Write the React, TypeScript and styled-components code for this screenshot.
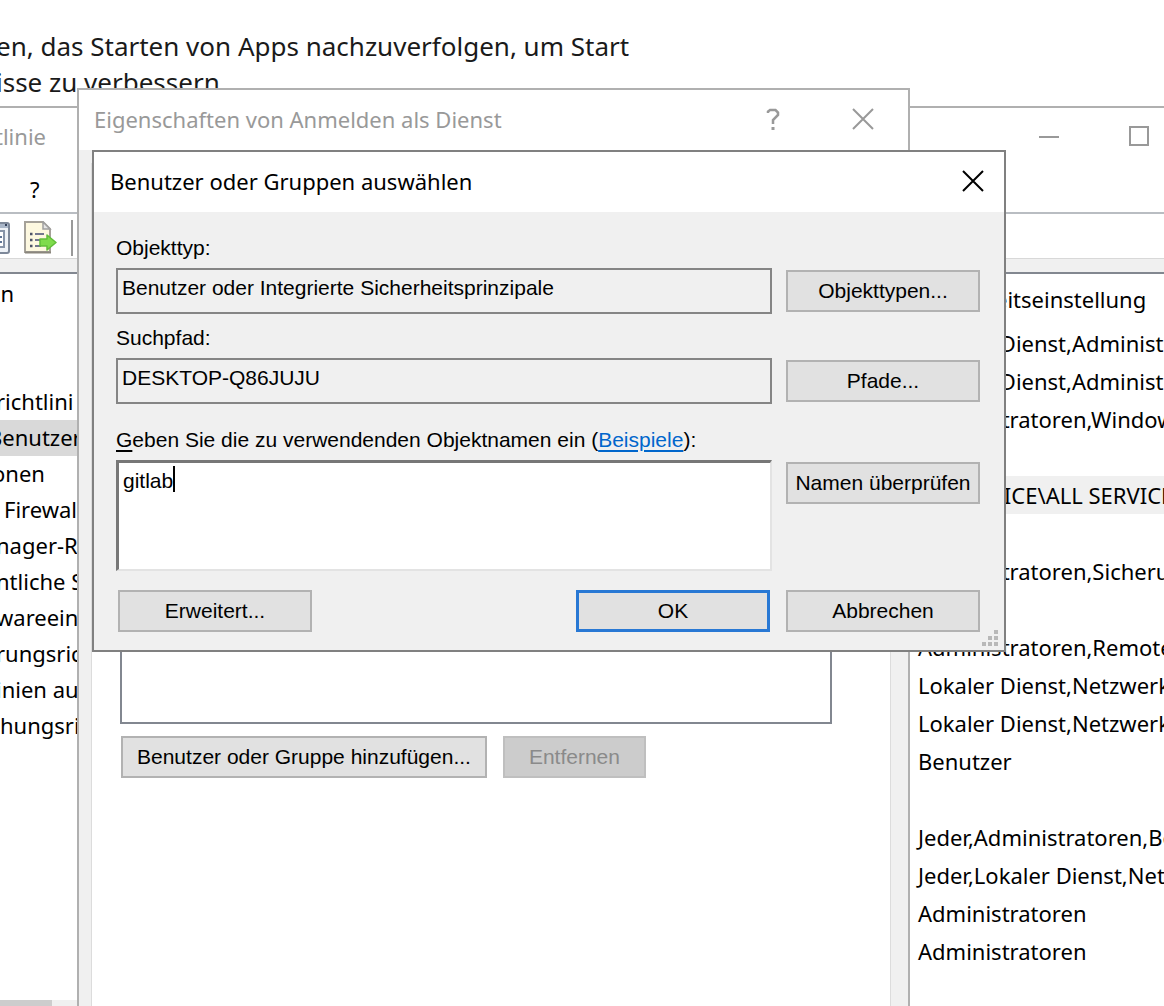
import React, { useState } from "react";
import styled, { createGlobalStyle } from "styled-components";

const UI = '"Noto Sans", "Open Sans", sans-serif';
const FORM = '"Liberation Sans", Arial, sans-serif';

const Global = createGlobalStyle`
  *, *::before, *::after { box-sizing: border-box; }
  body { margin: 0; background: #fff; color: #000; }
  button, input, textarea, select { font: inherit; color: inherit; border-radius: 0; }
`;

const Desktop = styled.div`
  position: relative;
  min-height: 100vh;
  overflow: hidden;
  font: 22px/28px ${UI};
`;

const Notice = styled.p`
  margin: 0 0 0 -4px;
  padding-top: 28px;
  font-size: 26px;
  line-height: 36px;
  color: #1a1a1a;
  white-space: nowrap;
`;

/* ---------- window parts ---------- */

const Title = styled.h1<{ $inactive?: boolean }>`
  flex: 1;
  margin: 0;
  font: inherit;
  color: ${(p) => (p.$inactive ? "#999" : "#000")};
  white-space: nowrap;
`;

const CaptionButton = styled.button<{ $inactive?: boolean; $compact?: boolean }>`
  display: grid;
  place-items: center;
  width: ${(p) => (p.$compact ? 62 : 90)}px;
  align-self: stretch;
  padding: 0;
  border: 0;
  background: none;
  color: ${(p) => (p.$inactive ? "#999" : "#000")};
`;

const TitleBar = styled.header<{ $height: number; $indent: number }>`
  display: flex;
  align-items: center;
  height: ${(p) => p.$height}px;
  padding: 0 0 3px ${(p) => p.$indent}px;
  background: #fff;
`;

/* ---------- policy console ---------- */

const ConsoleWindow = styled.section`
  position: absolute;
  inset: 106px -110px 0 -20px;
  display: flex;
  flex-direction: column;
  border-top: 2px solid #b0b0b0;
  background: #fff;
`;

const MenuBar = styled.nav`
  display: flex;
  align-items: center;
  height: 48px;
  padding-left: 42px;
  border-bottom: 2px solid #b9bdc2;
`;

const MenuItem = styled.button`
  padding: 0 8px;
  border: 0;
  background: none;
  line-height: 42px;
`;

const ToolBar = styled.div`
  display: flex;
  align-items: center;
  gap: 14px;
  height: 45px;
  padding: 4px 0 0 12px;
  border-bottom: 1px solid #d8d8d8;
`;

const ToolButton = styled.button`
  display: flex;
  padding: 0;
  border: 0;
  background: none;
`;

const ToolDivider = styled.span`
  width: 2px;
  height: 36px;
  background: #999;
`;

const Panes = styled.div`
  flex: 1;
  display: grid;
  grid-template-columns: 928px 1fr;
  min-height: 0;
  padding-top: 13px;
  background: #f0f0f0;
`;

const TreePane = styled.div`
  display: flex;
  flex-direction: column;
  min-width: 0;
  border-top: 2px solid #828790;
  background: #fff;
`;

const Tree = styled.ul`
  flex: 1;
  margin: 0;
  padding: 2px 0 0;
  list-style: none;
`;

const TreeItem = styled.li<{ $level: number; $selected?: boolean }>`
  height: 36px;
  padding-left: ${(p) => p.$level * 4}px;
  background: ${(p) => (p.$selected ? "#d9d9d9" : "transparent")};
  line-height: 34px;
  white-space: nowrap;
`;

const ScrollTrack = styled.div`
  height: 6px;
  background: #f0f0f0;
`;

const ScrollThumb = styled.div`
  width: 72px;
  height: 6px;
  background: #cdcdcd;
`;

const ListPane = styled.div`
  overflow: hidden;
  border-top: 2px solid #828790;
  background: #fff;
`;

const PolicyTable = styled.table`
  width: 100%;
  border-collapse: collapse;
  white-space: nowrap;

  th {
    height: 50px;
    padding: 0 10px;
    font-weight: normal;
    text-align: left;
  }
  td {
    height: 38px;
    padding: 0 10px;
  }
`;

const PolicyRow = styled.tr<{ $selected?: boolean }>`
  background: ${(p) => (p.$selected ? "#f0f0f0" : "transparent")};
`;

/* ---------- properties window ---------- */

const PropertiesWindow = styled.section`
  position: absolute;
  inset: 88px auto -40px 77px;
  width: 833px;
  display: flex;
  flex-direction: column;
  border: 2px solid #b0b0b0;
  background: #f0f0f0;
`;

const TabPage = styled.div`
  flex: 1;
  display: flex;
  flex-direction: column;
  gap: 12px;
  margin: 13px 17px 0 12px;
  padding: 60px 58px 0 28px;
  border: 1px solid #dcdcdc;
  background: #fff;
`;

const MemberList = styled.select`
  height: 500px;
  border: 2px solid #828790;
  background: #fff;
`;

const ButtonRow = styled.div`
  display: flex;
  gap: 16px;
  padding-left: 1px;
`;

const PushButton = styled.button<{ $primary?: boolean }>`
  height: 42px;
  padding: 0 14px;
  border: ${(p) => (p.$primary ? "3px solid #2878d4" : "2px solid #b2b2b2")};
  background: #e1e1e1;
  font: 21px/36px ${FORM};
  white-space: nowrap;

  &:disabled {
    padding: 0 24px;
    border-color: #bfbfbf;
    background: #ccc;
    color: #8a8a8a;
  }
`;

/* ---------- selection dialog ---------- */

const PickerWindow = styled.form`
  position: absolute;
  top: 150px;
  left: 92px;
  width: 914px;
  border: 2px solid #808080;
  background: #f0f0f0;
`;

const PickerBody = styled.div`
  padding: 22px 24px 18px 22px;
  font: 21px/28px ${FORM};
`;

const FieldRow = styled.div`
  display: grid;
  grid-template-columns: 1fr 194px;
  column-gap: 14px;
  align-items: start;

  ${PushButton} {
    margin-top: 2px;
    padding: 0;
  }
`;

const Caption = styled.div<{ $space?: number }>`
  margin: ${(p) => p.$space ?? 0}px 0 6px;
`;

const Mnemonic = styled.span`
  text-decoration: underline;
  text-underline-offset: 3px;
`;

const HelpLink = styled.a`
  color: #0066cc;
  text-underline-offset: 3px;
`;

const ReadOnlyField = styled.input`
  width: 100%;
  height: 46px;
  padding: 0 4px 6px;
  border: 2px solid #858585;
  outline: 0;
  background: #f0f0f0;
`;

const EntryFrame = styled.div`
  position: relative;
  display: grid;
`;

const NameEntry = styled.textarea`
  height: 111px;
  padding: 4px;
  border: solid;
  border-width: 3px 2px 2px 3px;
  border-color: #777 #e3e3e3 #e3e3e3 #777;
  outline: 0;
  background: #fff;
  resize: none;
`;

const Caret = styled.span`
  position: absolute;
  top: 6px;
  left: 57px;
  width: 2px;
  height: 26px;
  background: #000;
`;

const Actions = styled.footer`
  display: grid;
  grid-template-columns: 194px 1fr 194px 194px;
  column-gap: 16px;
  padding: 19px 0 0 2px;

  ${PushButton} { padding: 0; }
  ${PushButton}:nth-child(2) { grid-column: 3; }
`;

const Grip = styled.svg`
  position: absolute;
  right: 6px;
  bottom: 4px;
`;

/* ---------- drawings ---------- */

const CloseGlyph = () => (
  <svg width="22" height="22" viewBox="0 0 22 22" fill="none" stroke="currentColor" strokeWidth="2" aria-hidden="true">
    <path d="M1 1 21 21M21 1 1 21" />
  </svg>
);
const HelpGlyph = () => (
  <svg width="14" height="22" viewBox="0 0 14 22" fill="none" stroke="currentColor" strokeWidth="2.500" aria-hidden="true">
    <path d="M2 5V3.500L4 2H9.500L12 4.500V7L7 12V16" />
    <path d="M7 19V22" strokeWidth="3" />
  </svg>
);
const MinimizeGlyph = () => (
  <svg width="20" height="20" viewBox="0 0 20 20" fill="none" stroke="currentColor" strokeWidth="2" aria-hidden="true">
    <path d="M0 11H20" />
  </svg>
);
const MaximizeGlyph = () => (
  <svg width="20" height="20" viewBox="0 0 20 20" fill="none" stroke="currentColor" strokeWidth="2" aria-hidden="true">
    <path d="M1 1H19V19H1Z" />
  </svg>
);
const SheetIcon = () => (
  <svg width="18" height="32" viewBox="0 0 18 32" aria-hidden="true">
    <rect x="-12" y="1" width="29" height="30" rx="2" fill="#eef2f7" stroke="#7d8899" strokeWidth="2" />
    <path d="M-11 4H16" stroke="#a9b6c8" strokeWidth="4" />
    <path d="M13 3h2" stroke="#34415a" strokeWidth="2" />
    <path d="M5 9H12V25H5" fill="#fff" stroke="#8794a8" strokeWidth="2" />
    <path d="M6 15h4M6 20h4" stroke="#5f7596" strokeWidth="2" />
  </svg>
);
const ExportIcon = () => (
  <svg width="33" height="34" viewBox="0 0 33 34" aria-hidden="true">
    <path d="M1 1H19L26 8V31H1Z" fill="#fdf8e0" stroke="#a5a199" strokeWidth="2" />
    <path d="M1 31.500H27" stroke="#8a867d" strokeWidth="2" />
    <path d="M19 1V8H26Z" fill="#e6e6e6" stroke="#a0a0a0" strokeWidth="1.500" />
    <path d="M6 13h2.500M6 19h2.500M6 25h2.500" stroke="#4d5267" strokeWidth="2.500" />
    <path d="M11 13h9M11 19h6M11 25h6" stroke="#73778f" strokeWidth="2.200" />
    <path d="M16 18H23V14L32 21.500 23 29V25H16Z" fill="#7fdc4c" stroke="#62bd3a" strokeWidth="1.500" strokeLinejoin="round" />
  </svg>
);

/* ---------- data ---------- */

type Node = { text: string; level: number; selected?: boolean };
const tree: Node[] = [
  { text: "en", level: 2 },
  { text: "", level: 4 },
  { text: "", level: 4 },
  { text: "richtlini", level: 4 },
  { text: "Benutzer", level: 2, selected: true },
  { text: "onen", level: 3 },
  { text: "Firewal", level: 6 },
  { text: "nager-R", level: 4 },
  { text: "ntliche S", level: 4 },
  { text: "wareein", level: 4 },
  { text: "rungsric", level: 4 },
  { text: "inien au", level: 4 },
  { text: "hungsri", level: 5 },
];

const SELECTED_POLICY = 4;
const policies = [
  "Lokaler Dienst,Administratoren",
  "Lokaler Dienst,Administratoren",
  "Administratoren,Window Manager",
  "",
  "NT SERVICE\\ALL SERVICES",
  "",
  "Administratoren,Sicherungsoperatoren",
  "",
  "Administratoren,Remotedesktopbenutzer",
  "Lokaler Dienst,Netzwerkdienst",
  "Lokaler Dienst,Netzwerkdienst",
  "Benutzer",
  "",
  "Jeder,Administratoren,Benutzer",
  "Jeder,Lokaler Dienst,Netzwerkdienst",
  "Administratoren",
  "Administratoren",
];

function PolicyConsole() {
  return (
    <ConsoleWindow>
      <TitleBar $height={58} $indent={15}>
        <Title $inactive>tlinie</Title>
        <CaptionButton $inactive aria-label="Minimieren"><MinimizeGlyph /></CaptionButton>
        <CaptionButton $inactive aria-label="Maximieren"><MaximizeGlyph /></CaptionButton>
        <CaptionButton $inactive aria-label="Schließen"><CloseGlyph /></CaptionButton>
      </TitleBar>
      <MenuBar><MenuItem>?</MenuItem></MenuBar>
      <ToolBar>
        <ToolButton aria-label="Eigenschaften"><SheetIcon /></ToolButton>
        <ToolButton aria-label="Liste exportieren"><ExportIcon /></ToolButton>
        <ToolDivider />
      </ToolBar>
      <Panes>
        <TreePane>
          <Tree>
            {tree.map((n, i) => (
              <TreeItem key={i} $level={n.level} $selected={n.selected}>{n.text}</TreeItem>
            ))}
          </Tree>
          <ScrollTrack><ScrollThumb /></ScrollTrack>
        </TreePane>
        <ListPane>
          <PolicyTable>
            <thead><tr><th scope="col">Sicherheitseinstellung</th></tr></thead>
            <tbody>
              {policies.map((p, i) => (
                <PolicyRow key={i} $selected={i === SELECTED_POLICY}><td>{p}</td></PolicyRow>
              ))}
            </tbody>
          </PolicyTable>
        </ListPane>
      </Panes>
    </ConsoleWindow>
  );
}

function Properties() {
  return (
    <PropertiesWindow>
      <TitleBar $height={60} $indent={15}>
        <Title $inactive>Eigenschaften von Anmelden als Dienst</Title>
        <CaptionButton $inactive aria-label="Hilfe"><HelpGlyph /></CaptionButton>
        <CaptionButton $inactive aria-label="Schließen"><CloseGlyph /></CaptionButton>
      </TitleBar>
      <TabPage>
        <MemberList multiple aria-label="Mitglieder" />
        <ButtonRow>
          <PushButton>Benutzer oder Gruppe hinzufügen...</PushButton>
          <PushButton disabled>Entfernen</PushButton>
        </ButtonRow>
      </TabPage>
    </PropertiesWindow>
  );
}

function Picker() {
  const [names, setNames] = useState("gitlab");
  return (
    <PickerWindow onSubmit={(e) => e.preventDefault()}>
      <TitleBar $height={60} $indent={16}>
        <Title>Benutzer oder Gruppen auswählen</Title>
        <CaptionButton type="button" $compact aria-label="Schließen"><CloseGlyph /></CaptionButton>
      </TitleBar>
      <PickerBody>
        <Caption><label htmlFor="type">Objekttyp:</label></Caption>
        <FieldRow>
          <ReadOnlyField id="type" readOnly value="Benutzer oder Integrierte Sicherheitsprinzipale" />
          <PushButton type="button">Objekttypen...</PushButton>
        </FieldRow>
        <Caption $space={10}><label htmlFor="path">Suchpfad:</label></Caption>
        <FieldRow>
          <ReadOnlyField id="path" readOnly value="DESKTOP-Q86JUJU" />
          <PushButton type="button">Pfade...</PushButton>
        </FieldRow>
        <Caption $space={22}>
          <label htmlFor="names"><Mnemonic>G</Mnemonic>eben Sie die zu verwendenden Objektnamen ein </label>
          (<HelpLink href="#beispiele">Beispiele</HelpLink>):
        </Caption>
        <FieldRow>
          <EntryFrame>
            <NameEntry id="names" spellCheck={false} value={names} onChange={(e) => setNames(e.target.value)} />
            <Caret />
          </EntryFrame>
          <PushButton type="button">Namen überprüfen</PushButton>
        </FieldRow>
        <Actions>
          <PushButton type="button">Erweitert...</PushButton>
          <PushButton $primary>OK</PushButton>
          <PushButton type="button">Abbrechen</PushButton>
        </Actions>
      </PickerBody>
      <Grip width="16" height="16" viewBox="0 0 16 16" fill="#b8b8b8" aria-hidden="true">
        <path d="M12 0h4v4h-4zM6 6h4v4H6zM12 6h4v4h-4zM0 12h4v4H0zM6 12h4v4H6zM12 12h4v4h-4z" />
      </Grip>
    </PickerWindow>
  );
}

export default function App() {
  return (
    <Desktop>
      <Global />
      <Notice>
        en, das Starten von Apps nachzuverfolgen, um Start
        <br />
        isse zu verbessern
      </Notice>
      <PolicyConsole />
      <Properties />
      <Picker />
    </Desktop>
  );
}
